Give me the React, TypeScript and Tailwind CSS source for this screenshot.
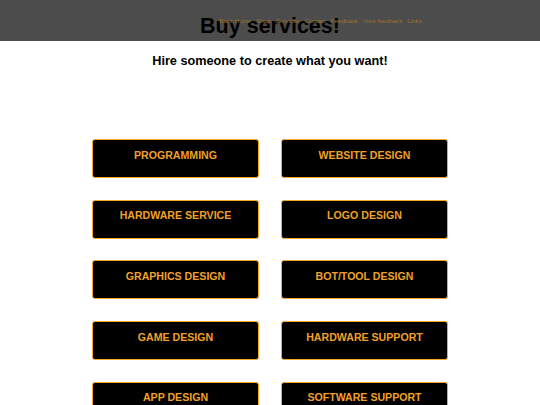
const navLinks = ["Back Home", "Shop", "Services", "Contact", "Feedback", "Your feedback", "Links"];

const services = [
  "PROGRAMMING",
  "WEBSITE DESIGN",
  "HARDWARE SERVICE",
  "LOGO DESIGN",
  "GRAPHICS DESIGN",
  "BOT/TOOL DESIGN",
  "GAME DESIGN",
  "HARDWARE SUPPORT",
  "APP DESIGN",
  "SOFTWARE SUPPORT",
];

export default function App() {
  return (
    <div className="relative min-h-[405px] w-full overflow-hidden bg-white font-['Liberation_Sans',Arial,sans-serif]">
      <header className="absolute inset-x-0 top-0 z-10 flex h-[41px] items-center justify-center bg-black/70 pl-[101px]">
        <nav className="flex gap-[5px] text-[6.2px] text-[#9a7230]">
          {navLinks.map((l) => (
            <a key={l} href="#" className="whitespace-nowrap">
              {l}
            </a>
          ))}
        </nav>
      </header>

      <main className="flex flex-col items-center">
        <h1 className="mt-[14px] text-[21.5px] font-bold leading-[24px] text-black">
          Buy services!
        </h1>
        <p className="mt-[16px] text-[12.7px] font-bold leading-[15px] text-black">
          Hire someone to create what you want!
        </p>

        <div className="mt-[70px] grid grid-cols-[167px_167px] gap-x-[22px] gap-y-[21.7px]">
          {services.map((s) => (
            <a
              key={s}
              href="#"
              className="block h-[39px] rounded-[3px] border border-[#f5a623] bg-black pt-[8.5px] text-center text-[10.6px] font-bold leading-[12px] text-[#f0a028]"
            >
              {s}
            </a>
          ))}
        </div>
      </main>
    </div>
  );
}
